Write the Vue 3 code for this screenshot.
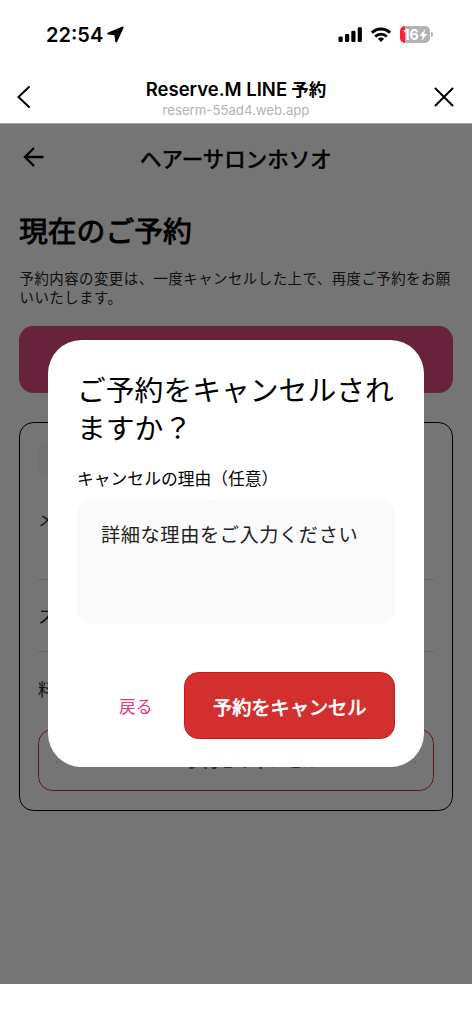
<script setup>
const rows = ['メニュー', 'スタッフ', '料金']
</script>

<template>
  <div class="screen">
    <header class="chrome">
      <div class="status">
        <div class="clock">
          <span>22:54</span>
          <svg width="17" height="17" viewBox="0 0 17 17"><path d="M15 .7 1.2 6.4c-1.2.5-1.1 2 .1 2.2l6.1.7.8 6.1c.2 1.2 1.6 1.3 2.1.1L16.5 2.1c.4-1-.5-1.8-1.5-1.4Z" /></svg>
        </div>
        <div class="signals">
          <svg width="25" height="16" viewBox="0 0 25 16"><rect x=".5" y="9.5" width="4.2" height="5.5" rx="1.3" /><rect x="7" y="7" width="4.2" height="8" rx="1.3" /><rect x="13.3" y="3.7" width="4.2" height="11.3" rx="1.3" /><rect x="19.7" y=".3" width="4.2" height="14.7" rx="1.3" /></svg>
          <svg class="wifi" width="20" height="16" viewBox="0 0 20 16" fill="none" stroke="#000" stroke-width="2.9"><path d="M.9 5.7C6.1.7 13.9.7 19.1 5.7" /><path d="M4.2 9.5c3.4-3.2 8.2-3.2 11.6 0" /><path d="M6.9 11.8c1.8-1.6 4.4-1.6 6.2 0L10 15Z" fill="#000" stroke="none" /></svg>
          <div class="battery"><span>16</span><svg width="9" height="12" viewBox="0 0 9 12"><path d="M6.5 0 .5 6.7h3.3L2.3 12l6.2-7H5.2Z" fill="#fff" /></svg></div>
          <i class="cap"></i>
        </div>
      </div>
      <div class="browser">
        <svg width="20" height="26" viewBox="0 0 20 26"><path d="M15 3 4.5 13 15 23" /></svg>
        <div class="names"><strong>Reserve.M LINE<span> 予約</span></strong><small>reserm-55ad4.web.app</small></div>
        <svg width="20" height="20" viewBox="0 0 20 20"><path d="m1.5 1.5 17 17m0-17-17 17" /></svg>
      </div>
    </header>

    <main class="page">
      <div class="appbar">
        <svg width="22" height="22" viewBox="0 0 22 22"><path d="M20.5 11H2.5M11 2l-9 9 9 9" /></svg>
        <h1>ヘアーサロンホソオ</h1>
      </div>
      <h2>現在のご予約</h2>
      <p class="note">予約内容の変更は、一度キャンセルした上で、再度ご予約をお願いいたします。</p>
      <div class="primary"></div>
      <section class="card">
        <div class="chip"></div>
        <div v-for="(row, i) in rows" :key="row" class="row" :class="'row' + i">{{ row }}</div>
        <div class="outline">予約をキャンセル</div>
      </section>

      <div class="scrim">
        <section class="dialog">
          <h3>ご予約をキャンセルされますか？</h3>
          <label>キャンセルの理由（任意）</label>
          <div class="field">詳細な理由をご入力ください</div>
          <div class="actions">
            <button class="back">戻る</button>
            <button class="confirm">予約をキャンセル</button>
          </div>
        </section>
      </div>
    </main>
  </div>
</template>

<style>
body { margin: 0; background: #fff; }
</style>

<style scoped>
* { box-sizing: border-box; }
h1, h2, h3, p { margin: 0; }
.screen { width: 472px; height: 1024px; overflow: hidden; background: #fff; color: #000; font-family: "Noto Sans CJK JP", sans-serif; }
.chrome { height: 124px; border-bottom: 1px solid #a2a2a2; font-family: Inter, "Noto Sans CJK JP", sans-serif; }
.status { height: 69px; padding: 0 39px 0 46px; display: flex; justify-content: space-between; align-items: center; }
.clock { display: flex; align-items: center; gap: 4px; font-size: 20px; font-weight: 600; }
.signals { display: flex; align-items: center; }
.wifi { margin: 0 9px 0 8px; }
.battery { width: 30px; height: 17px; border-radius: 5px; background: linear-gradient(90deg, #fc2136 5px, #b3b3b3 5px); color: #fff; font-size: 14px; font-weight: 700; display: flex; align-items: center; justify-content: center; padding-left: 1px; }
.cap { width: 2px; height: 5px; margin-left: 1px; border-radius: 0 2px 2px 0; background: #b3b3b3; }
.browser { height: 54px; padding: 1px 18px 0 14px; display: flex; align-items: center; justify-content: space-between; }
.browser svg { fill: none; stroke: #000; stroke-width: 2; stroke-linecap: round; }
.names { display: flex; flex-direction: column; align-items: center; white-space: nowrap; padding-top: 3px; }
.names strong { font-size: 18.5px; line-height: 24px; font-weight: 600; position: relative; left: 2px; }
.names strong span { font-size: 17.5px; font-weight: 700; }
.names small { font-size: 13.2px; line-height: 17px; color: #b3b3b3; position: relative; left: 2px; }
.page { position: relative; height: 860px; padding: 0 19px; }
.appbar { height: 66px; display: flex; align-items: center; padding-left: 4px; }
.appbar svg { fill: none; stroke: #000; stroke-width: 2.4; }
.appbar h1 { margin-left: 95px; font-size: 21.4px; line-height: 32px; font-weight: 400; -webkit-text-stroke: .7px #000; letter-spacing: .1px; padding-top: 2px; }
h2 { font-size: 28.8px; line-height: 40px; font-weight: 400; -webkit-text-stroke: .9px #000; margin-top: 20px; }
.note { margin-top: 18px; font-size: 14.4px; line-height: 19.4px; letter-spacing: .5px; color: #242424; width: 440px; padding-left: .5px; }
.primary { height: 67.5px; margin-top: 18.7px; border-radius: 14.4px; background: #e24a82; }
.card { margin-top: 29px; height: 388.5px; border: 1.5px solid #000; border-radius: 14.4px; padding: 18px; }
.chip { width: 100px; height: 35px; border-radius: 9px; background: #f8f8f8; }
.row { font-size: 16.8px; line-height: 24px; color: #242424; display: flex; align-items: center; border-bottom: 1px solid #dedede; }
.row0 { height: 104px; padding-bottom: 18px; }
.row1 { height: 72px; }
.row2 { height: 77px; border: 0; padding-bottom: 4px; }
.outline { height: 62px; padding-left: 32px; border: 1.5px solid #d32f2f; border-radius: 14.4px; color: #d32f2f; font-size: 16.8px; font-weight: 600; display: flex; align-items: center; justify-content: center; }
.scrim { position: absolute; inset: 0; background: rgba(0, 0, 0, .54); display: flex; align-items: center; justify-content: center; padding-bottom: 1px; }
.dialog { width: 376px; height: 427px; background: #fff; border-radius: 33.6px; padding: 30px 29px 28.5px; display: flex; flex-direction: column; }
h3 { font-size: 28.8px; line-height: 38.4px; font-weight: 400; width: 322px; }
label { margin-top: 18px; font-size: 16.8px; line-height: 26px; }
.field { margin-top: 8px; height: 125px; border-radius: 14.4px; background: #fafafa; padding: 21px 24px; font-size: 19.2px; line-height: 29px; letter-spacing: .6px; white-space: nowrap; color: #222; }
.actions { margin-top: auto; display: flex; justify-content: flex-end; align-items: center; gap: 31px; }
button { border: 0; padding: 0; font-family: inherit; }
.back { background: none; color: #e5368a; font-size: 16.8px; padding-top: 1px; }
.confirm { width: 211.5px; height: 66.5px; border-radius: 14.4px; border: 1px solid #d01616; background: #d32f2f; color: #fff; font-size: 19.2px; font-weight: 400; -webkit-text-stroke: .7px #fff; padding: 3px 0 0 1px; }
</style>
